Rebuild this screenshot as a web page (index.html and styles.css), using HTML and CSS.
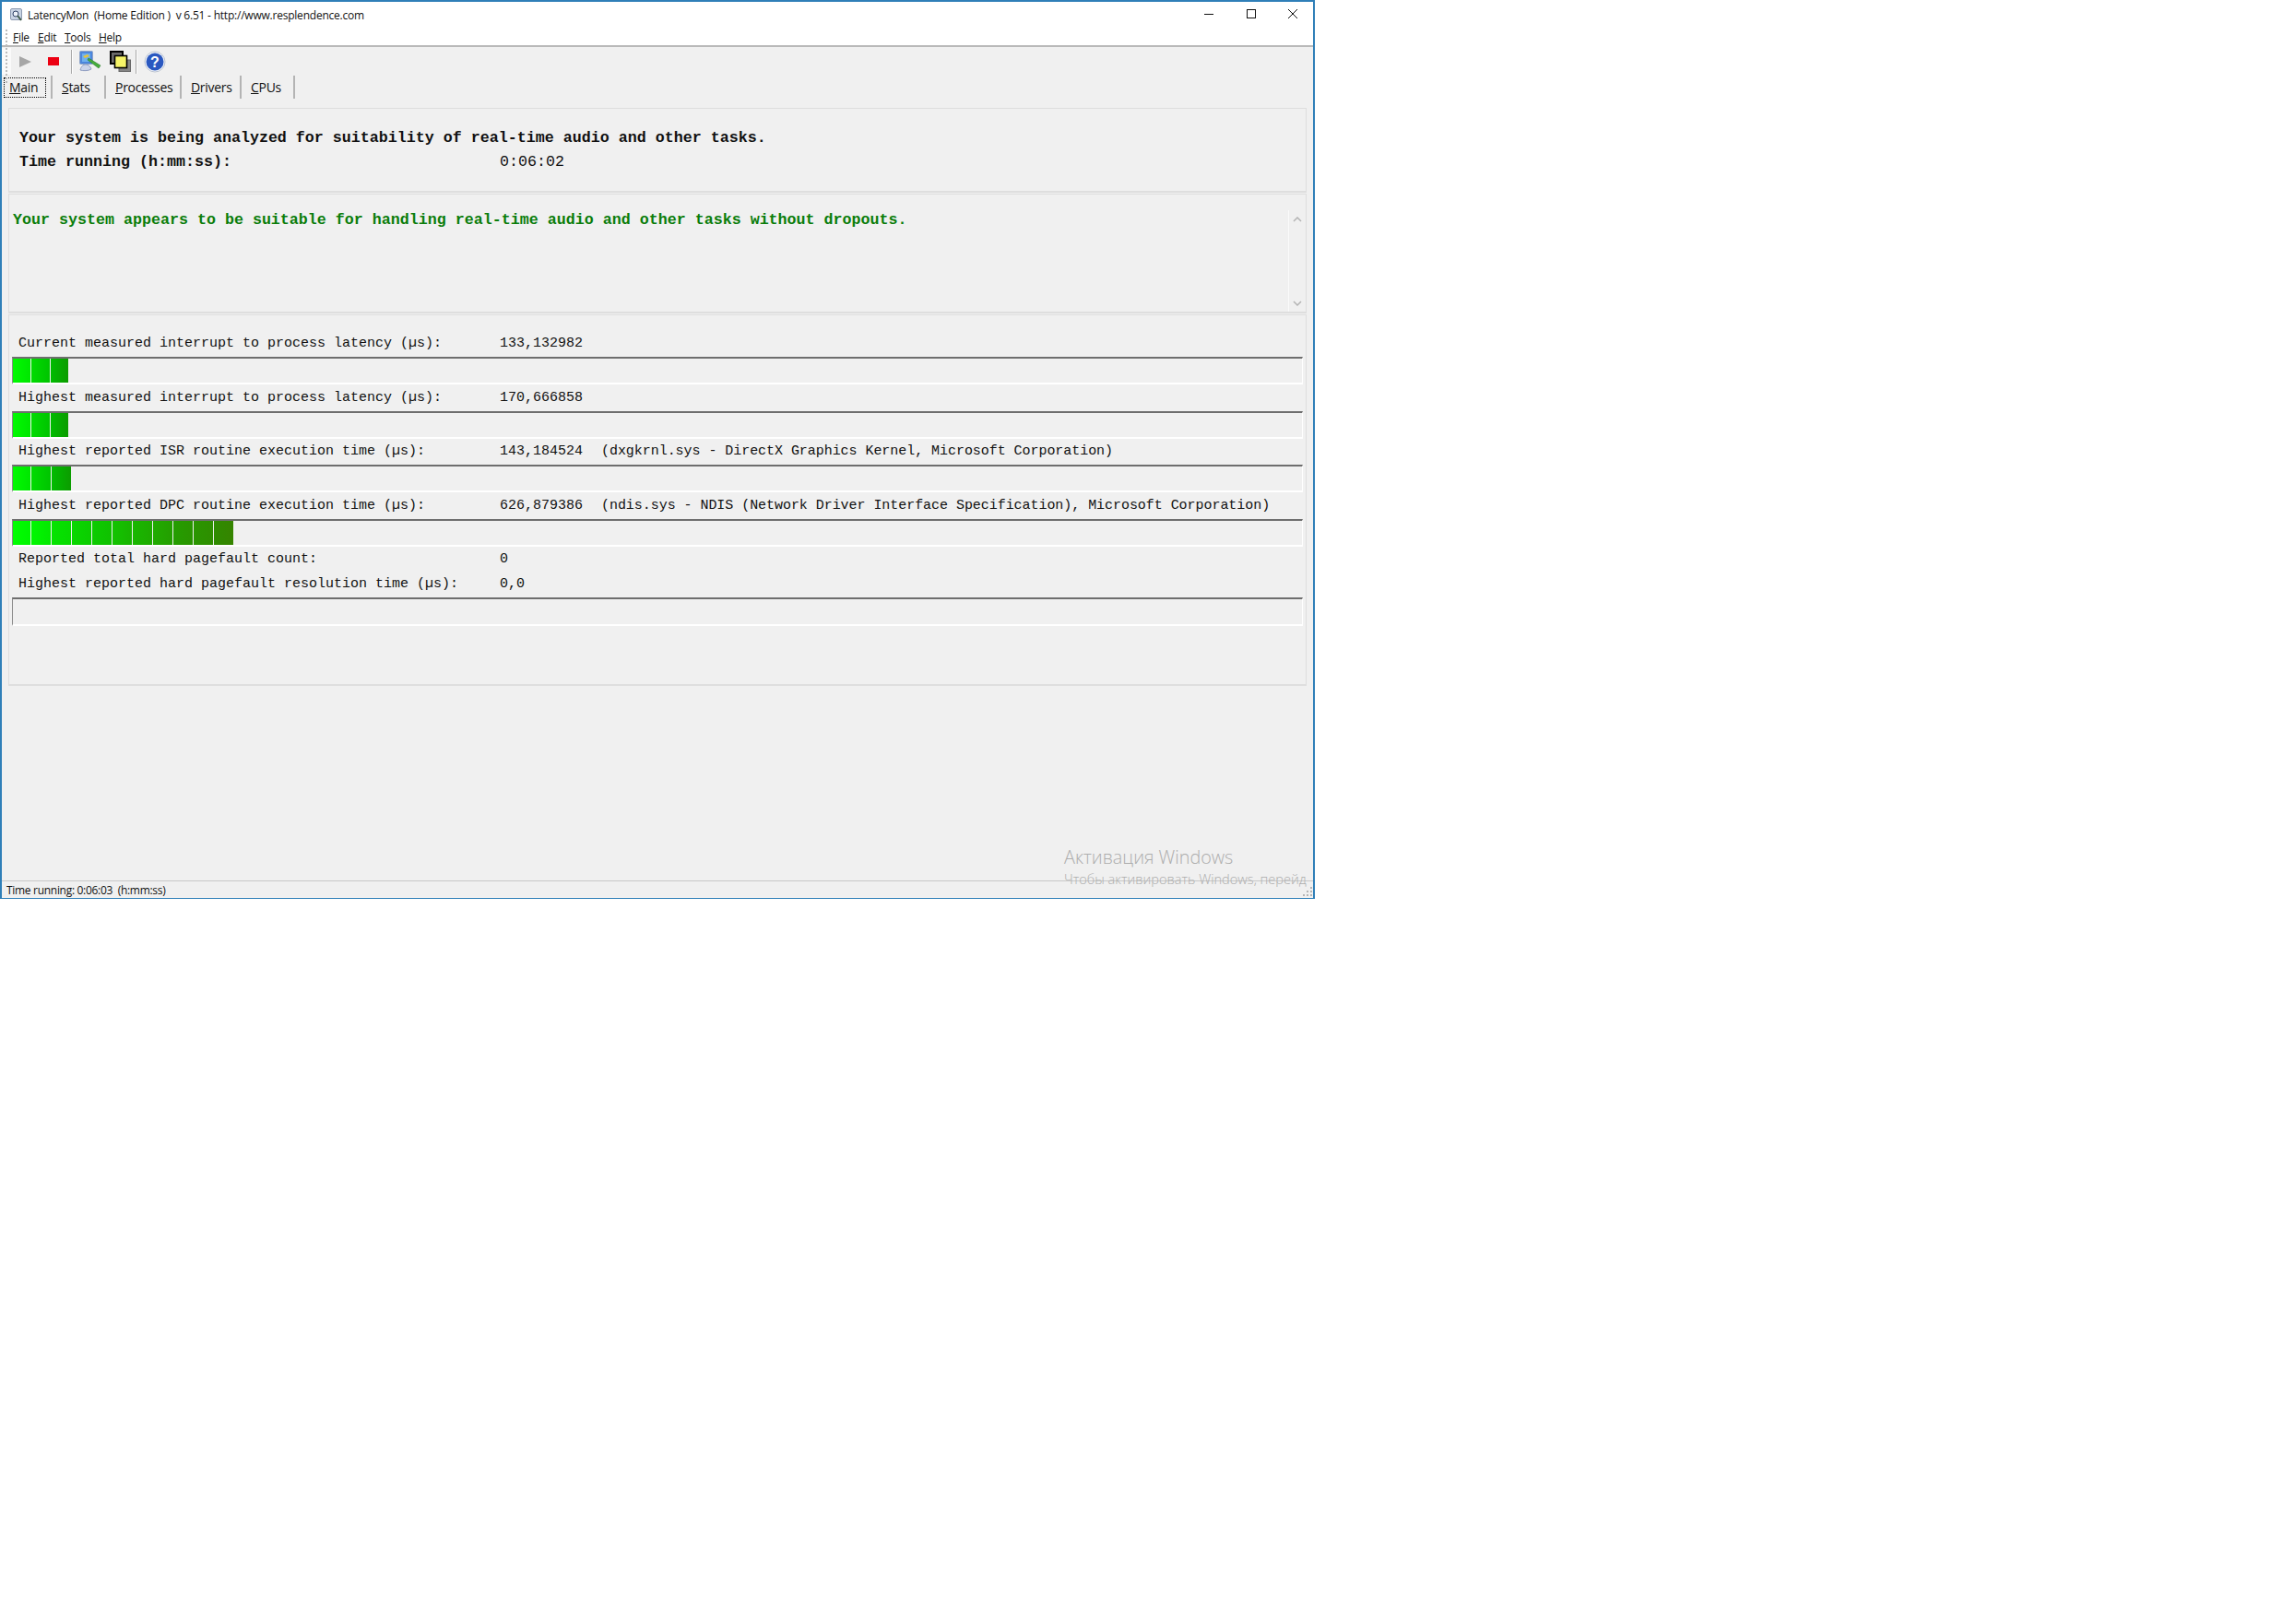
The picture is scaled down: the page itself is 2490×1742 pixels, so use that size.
FILE: index.html
```html
<!DOCTYPE html>
<html lang="en">
<head>
    <meta charset="UTF-8">
    <title>LatencyMon</title>
    <link rel="stylesheet" href="styles.css">
</head>
<body>

    <div class="window">
        <!-- Title bar -->
        <div class="titlebar">
            <svg class="app-icon" viewBox="0 0 14 15" width="14" height="15">
                <rect x="0.5" y="0.5" width="12" height="12" rx="1.5" fill="#c9d4e4" stroke="#8c9ab0"/>
                <circle cx="6" cy="6" r="3" fill="#eef3fa" stroke="#2c3e63"/>
                <path d="M8 8l4 5" stroke="#3f5a4a" stroke-width="2"/>
            </svg>
            <span class="title-text">LatencyMon&nbsp; (Home Edition )&nbsp; v 6.51 - http://www.resplendence.com</span>
            <div class="window-controls">
                <svg viewBox="0 0 46 30" width="46" height="30"><path d="M18 14.500h10" stroke="#111" fill="none"/></svg>
                <svg viewBox="0 0 46 30" width="46" height="30"><rect x="18.500" y="9.500" width="9" height="9" stroke="#111" fill="none"/></svg>
                <svg viewBox="0 0 46 30" width="46" height="30"><path d="M18 9l10 10M28 9l-10 10" stroke="#111" fill="none"/></svg>
            </div>
        </div>

        <!-- Menu -->
        <div class="menubar">
            <span><u>F</u>ile</span>
            <span><u>E</u>dit</span>
            <span><u>T</u>ools</span>
            <span><u>H</u>elp</span>
        </div>

        <!-- Toolbar -->
        <div class="toolbar">
            <div class="toolbar-strip"></div>
            <svg class="tool" viewBox="0 0 13 12" width="13" height="12"><path d="M0 0l13 6-13 6z" fill="#a6a6a6"/></svg>
            <svg class="tool tool-stop" viewBox="0 0 12 9" width="12" height="9"><rect width="12" height="9" fill="#ec0012"/></svg>
            <div class="tool-sep"></div>
            <svg class="tool tool-monitor" viewBox="0 0 25 23" width="25" height="23">
                <path d="M2 21c1-4 3-6 6-6s5 2 6 5c-3 2-9 2-12 1z" fill="#ccd4ea" stroke="#8e9cc0"/>
                <rect x="1.500" y="0.500" width="14" height="14" rx="1" fill="#4c86dc" stroke="#8fa4c8"/>
                <rect x="4" y="3" width="9" height="9" fill="#6fb0ee"/>
                <path d="M5 6l5-2 2 2-5 2z" fill="#e8c43a"/>
                <path d="M11 8l13 8-2 3L10 10z" fill="#45ad3a" stroke="#1f6a1f" stroke-width="0.500"/>
            </svg>
            <svg class="tool tool-windows" viewBox="0 0 23 23" width="23" height="23">
                <rect x="1" y="1" width="13" height="13" fill="#6c6c6c" stroke="#000" stroke-width="2"/>
                <rect x="10" y="10" width="12.500" height="12.500" fill="#858585" stroke="#666" stroke-width="1"/>
                <rect x="5.500" y="5.500" width="13" height="13" fill="#f6f468" stroke="#000" stroke-width="1.600"/>
            </svg>
            <div class="tool-sep tool-sep-2"></div>
            <svg class="tool tool-help" viewBox="0 0 24 24" width="24" height="24">
                <circle cx="12" cy="12" r="11" fill="#f6f8fc" stroke="#b9c2d0"/>
                <circle cx="12" cy="12" r="9.500" fill="#2a58c0"/>
                <text x="12" y="17.500" text-anchor="middle" class="help-mark">?</text>
            </svg>
        </div>
        <div class="gripper"></div>

        <!-- Tabs -->
        <div class="tabs">
            <div class="tab tab-main"><span class="focus"><u>M</u>ain</span></div>
            <div class="tab tab-stats"><u>S</u>tats</div>
            <div class="tab tab-processes"><u>P</u>rocesses</div>
            <div class="tab tab-drivers"><u>D</u>rivers</div>
            <div class="tab tab-cpus"><u>C</u>PUs</div>
        </div>

        <!-- Main tab -->
        <div class="panel panel-status">
            <div class="status-line"><span>Your system is being analyzed for suitability of real-time audio and other tasks.</span></div>
            <div class="status-line"><span class="status-label">Time running (h:mm:ss):</span><span class="status-value">0:06:02</span></div>
        </div>

        <div class="panel panel-verdict">
            <div class="verdict">Your system appears to be suitable for handling real-time audio and other tasks without dropouts.</div>
            <div class="scroller">
                <svg viewBox="0 0 10 6" width="10" height="6"><path d="M1 5l4-4 4 4" stroke="#b4b4b4" stroke-width="1.500" fill="none"/></svg>
                <svg viewBox="0 0 10 6" width="10" height="6"><path d="M1 1l4 4 4-4" stroke="#b4b4b4" stroke-width="1.500" fill="none"/></svg>
            </div>
        </div>

        <div class="panel panel-metrics">
            <div class="metric">
                <div class="metric-text"><span class="metric-label">Current measured interrupt to process latency (µs):</span><span>133,132982</span></div>
                <div class="meter short">
                    <i></i><i></i><i></i>
                </div>
            </div>
            <div class="metric">
                <div class="metric-text"><span class="metric-label">Highest measured interrupt to process latency (µs):</span><span>170,666858</span></div>
                <div class="meter short">
                    <i></i><i></i><i></i>
                </div>
            </div>
            <div class="metric">
                <div class="metric-text"><span class="metric-label">Highest reported ISR routine execution time (µs):</span><span>143,184524</span><span class="metric-detail">(dxgkrnl.sys - DirectX Graphics Kernel, Microsoft Corporation)</span></div>
                <div class="meter short wide">
                    <i></i><i></i><i></i>
                </div>
            </div>
            <div class="metric">
                <div class="metric-text"><span class="metric-label">Highest reported DPC routine execution time (µs):</span><span>626,879386</span><span class="metric-detail">(ndis.sys - NDIS (Network Driver Interface Specification), Microsoft Corporation)</span></div>
                <div class="meter long">
                    <i></i><i></i><i></i><i></i><i></i><i></i><i></i><i></i><i></i><i></i><i></i>
                </div>
            </div>
            <div class="metric-text plain"><span class="metric-label">Reported total hard pagefault count:</span><span>0</span></div>
            <div class="metric-text plain last"><span class="metric-label">Highest reported hard pagefault resolution time (µs):</span><span>0,0</span></div>
            <div class="meter empty"></div>
        </div>

        <!-- Status bar -->
        <div class="statusbar">Time running: 0:06:03&nbsp; (h:mm:ss)</div>
        <svg class="grip" viewBox="0 0 10 10" width="10" height="10">
            <path d="M8 0h2v2H8zM4 4h2v2H4zM8 4h2v2H8zM0 8h2v2H0zM4 8h2v2H4zM8 8h2v2H8z" fill="#b4b4b4"/>
        </svg>

        <div class="watermark">
            <div class="watermark-title">Активация Windows</div>
            <div class="watermark-sub">Чтобы активировать Windows, перейд</div>
        </div>
    </div>

</body>
</html>
```

FILE: styles.css
```css
* {
    margin: 0;
    padding: 0;
    box-sizing: border-box;
}

body {
    background-color: white;
    height: 1742px;
    overflow: hidden;
    font-family: 'Open Sans', sans-serif;
    color: #111;
}

.window {
    position: relative;
    width: 1426px;
    height: 975px;
    border: 2px solid #2f7fb8;
    border-bottom-width: 1px;
    background-color: #f0f0f0;
    overflow: hidden;
}

.titlebar {
    display: flex;
    align-items: center;
    height: 30px;
    padding: 0 0 2px 9px;
    background-color: white;
    font-size: 12px;
    letter-spacing: -0.22px;
}

.app-icon {
    margin-right: 5px;
}

.window-controls {
    display: flex;
    margin-left: auto;
    margin-right: -1px;
}

.window-controls svg {
    margin-left: -0.5px;
}

.menubar {
    display: flex;
    align-items: center;
    height: 19px;
    padding-left: 12px;
    background-color: white;
    border-bottom: 2px solid #b9b9b9;
    font-size: 12px;
    letter-spacing: -0.3px;
}

.menubar span:nth-child(1) { width: 27px; }
.menubar span:nth-child(2) { width: 29px; }
.menubar span:nth-child(3) { width: 37px; }

.toolbar {
    display: flex;
    align-items: center;
    height: 30px;
    padding-top: 1px;
}

.toolbar-strip {
    align-self: stretch;
    width: 10px;
    margin-right: 9px;
    background-color: #fafafa;
}

.gripper {
    position: absolute;
    left: 4px;
    top: 30px;
    height: 58px;
    border-left: 2px dotted #bcbcbc;
}

.tool-stop {
    margin-left: 18px;
}

.tool-sep {
    width: 2px;
    height: 26px;
    margin-left: 13px;
    background-color: #a8a8a8;
    border-right: 1px solid white;
}

.tool-monitor {
    margin-left: 6px;
}

.tool-windows {
    margin-left: 9px;
}

.tool-sep-2 {
    margin-left: 5px;
}

.tool-help {
    margin-left: 7px;
}

.help-mark {
    font-family: 'Liberation Sans', sans-serif;
    font-size: 16px;
    font-weight: bold;
    fill: white;
}

.tabs {
    display: flex;
    height: 27px;
    font-size: 14px;
    letter-spacing: -0.3px;
}

.tab {
    display: flex;
    align-items: center;
    border-right: 2px solid #b4b4b4;
    margin: 1px 0;
    padding-left: 10px;
}

.tab-main { width: 55px; padding-left: 2px; }
.tab-stats { width: 58px; }
.tab-processes { width: 82px; }
.tab-drivers { width: 65px; }
.tab-cpus { width: 58px; }

.focus {
    width: 46px;
    height: 22px;
    padding-left: 5px;
    line-height: 20px;
    border: 1px dotted #000;
}

.panel {
    margin: 0 7px;
    border: 1px solid #dedede;
    border-bottom-width: 2px;
}

.panel-status {
    height: 92px;
    margin-top: 9px;
    padding: 19px 0 0 11px;
    font-family: 'Liberation Mono', monospace;
    font-size: 16.67px;
    font-weight: bold;
}

.status-line {
    display: flex;
    height: 26px;
    line-height: 26px;
}

.status-label {
    width: 521px;
}

.status-value {
    font-weight: normal;
}

.panel-verdict {
    position: relative;
    height: 130px;
    margin-top: 1px;
    padding: 15px 0 0 4px;
}

.verdict {
    font-family: 'Liberation Mono', monospace;
    font-size: 16.67px;
    font-weight: bold;
    line-height: 26px;
    color: #0a7d0a;
}

.scroller {
    position: absolute;
    top: 17px;
    right: 0;
    bottom: 0;
    width: 19px;
    display: flex;
    flex-direction: column;
    justify-content: space-between;
    align-items: center;
    padding: 7px 0 6px;
    border-left: 1px solid #fafafa;
}

.panel-metrics {
    height: 403px;
    margin-top: 1px;
    padding: 16px 3px 0 3px;
    font-family: 'Liberation Mono', monospace;
    font-size: 15px;
}

.metric {
    height: 58.67px;
}

.metric-text {
    display: flex;
    height: 29px;
    line-height: 29px;
    padding-left: 7px;
}

.metric-text.plain {
    height: 27px;
    line-height: 28px;
}

.metric-text.last {
    height: 28px;
}

.metric-label {
    width: 522px;
    flex-shrink: 0;
}

.metric-detail {
    margin-left: 20px;
    letter-spacing: -0.05px;
}

.meter {
    display: flex;
    gap: 1px;
    height: 30px;
    border-top: 2px solid #6e6e6e;
    border-left: 1px solid #8a8a8a;
    border-right: 1px solid white;
    border-bottom: 2px solid white;
}

.meter.empty {
    height: 31px;
}

.meter i {
    display: block;
    width: 21px;
    height: 26px;
}

.short i {
    width: 19.5px;
}

.short.wide i {
    width: 21px;
}

.meter.short i:first-child,
.meter.long i:first-child {
    width: 19px;
}

.short i:nth-child(1) { background: linear-gradient(90deg, #00fa00, #00e600); }
.short i:nth-child(2) { background: linear-gradient(90deg, #00dc00, #00c400); }
.short i:nth-child(3) { background: linear-gradient(90deg, #00bc00, #0c9c00); }

.long i:nth-child(1) { background: linear-gradient(90deg, #00ff00, #00f400); }
.long i:nth-child(2) { background: linear-gradient(90deg, #00f800, #04e800); }
.long i:nth-child(3) { background: linear-gradient(90deg, #04e400, #08da00); }
.long i:nth-child(4) { background: linear-gradient(90deg, #08d800, #0ccc00); }
.long i:nth-child(5) { background: linear-gradient(90deg, #0ccc00, #10c000); }
.long i:nth-child(6) { background: linear-gradient(90deg, #12c400, #18b400); }
.long i:nth-child(7) { background: linear-gradient(90deg, #18b800, #1eaa00); }
.long i:nth-child(8) { background: linear-gradient(90deg, #20ac00, #249e00); }
.long i:nth-child(9) { background: linear-gradient(90deg, #249e00, #2a9400); }
.long i:nth-child(10) { background: linear-gradient(90deg, #2a9600, #2e8e00); }
.long i:nth-child(11) { background: linear-gradient(90deg, #2e8c00, #368400); }

.statusbar {
    position: absolute;
    left: 0;
    right: 0;
    bottom: 0;
    height: 19px;
    padding-left: 5px;
    border-top: 1px solid #c8c8c8;
    font-size: 12px;
    line-height: 20px;
    letter-spacing: -0.3px;
}

.grip {
    position: absolute;
    right: 1px;
    bottom: 2px;
}

/* overlay drawn by the OS */
.watermark {
    position: absolute;
    left: 1152px;
    top: 914px;
    white-space: nowrap;
    color: #adadad;
}

.watermark-title {
    font-size: 19.8px;
    font-weight: 300;
    line-height: 28px;
}

.watermark-sub {
    font-size: 14.6px;
    font-weight: 300;
    line-height: 18px;
}
```
